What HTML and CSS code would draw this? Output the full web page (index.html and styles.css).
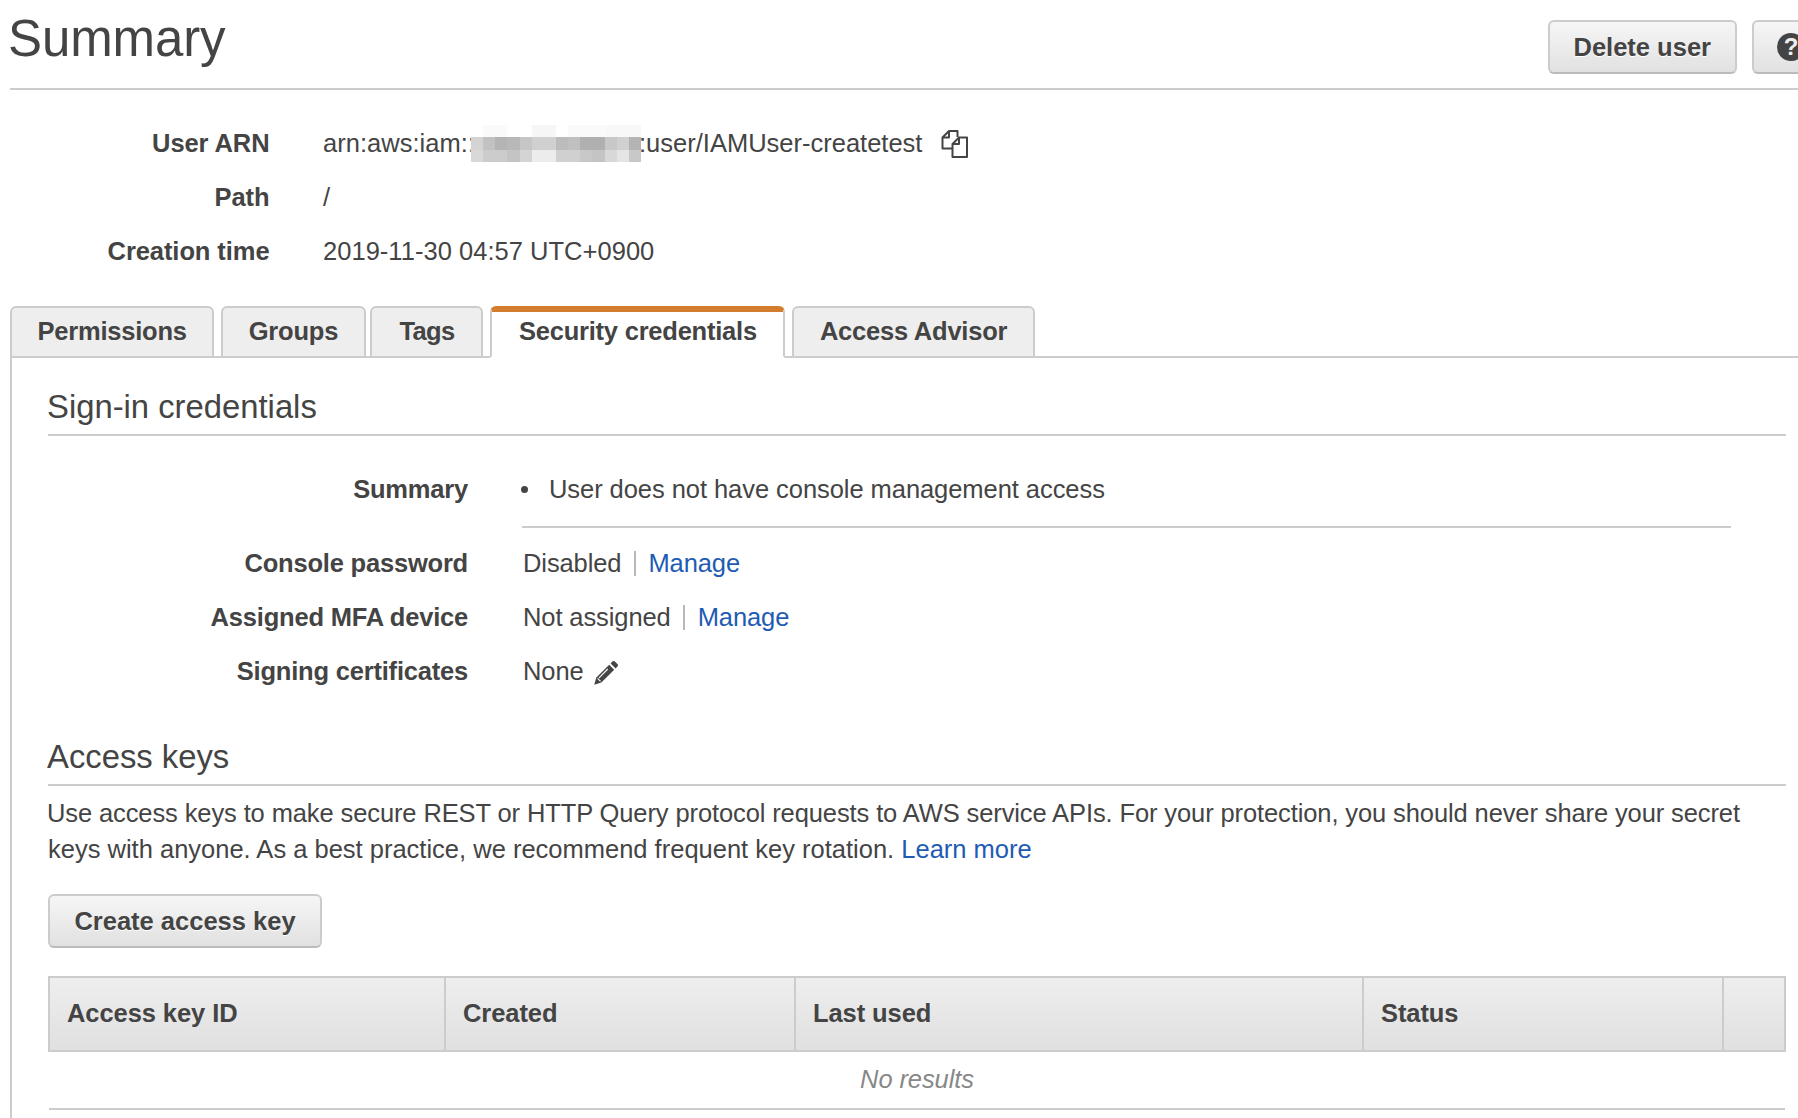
FILE: index.html
```html
<!DOCTYPE html>
<html lang="en">
<head>
<meta charset="utf-8">
<title>Summary</title>
<link rel="stylesheet" href="styles.css">
</head>
<body>
<header class="page-head">
  <h1 class="page-title">Summary</h1>
  <div class="head-actions">
    <button class="btn btn-delete">Delete user</button>
    <button class="btn btn-help"><span class="help-dot">?</span></button>
  </div>
</header>

<dl class="meta">
  <dt>User ARN</dt>
  <dd><span>arn:aws:iam::</span><svg class="blur" viewBox="0 0 14 3" width="170" height="37" preserveAspectRatio="none" aria-hidden="true" shape-rendering="crispEdges">
    <rect x="1" y="0" width="2" height="1" fill="#fafafa"/><rect x="5" y="0" width="2" height="1" fill="#f6f6f6"/><rect x="8" y="0" width="3" height="1" fill="#fafafa"/><rect x="11" y="0" width="3" height="1" fill="#f8f8f8"/>
    <rect x="0" y="1" width="1" height="1" fill="#d4d4d4"/><rect x="1" y="1" width="1" height="1" fill="#c2c2c2"/><rect x="2" y="1" width="1" height="1" fill="#b4b4b4"/><rect x="3" y="1" width="1" height="1" fill="#b8b8b8"/><rect x="4" y="1" width="1" height="1" fill="#c6c6c6"/><rect x="5" y="1" width="2" height="1" fill="#d0d0d0"/><rect x="7" y="1" width="1" height="1" fill="#bcbcbc"/><rect x="8" y="1" width="1" height="1" fill="#c0c0c0"/><rect x="9" y="1" width="2" height="1" fill="#b0b0b0"/><rect x="11" y="1" width="1" height="1" fill="#c8c8c8"/><rect x="12" y="1" width="1" height="1" fill="#d0d0d0"/><rect x="13" y="1" width="1" height="1" fill="#b4b4b4"/>
    <rect x="0" y="2" width="1" height="1" fill="#d8d8d8"/><rect x="1" y="2" width="2" height="1" fill="#cccccc"/><rect x="3" y="2" width="1" height="1" fill="#c4c4c4"/><rect x="4" y="2" width="1" height="1" fill="#d4d4d4"/><rect x="5" y="2" width="2" height="1" fill="#ececec"/><rect x="7" y="2" width="2" height="1" fill="#d0d0d0"/><rect x="9" y="2" width="1" height="1" fill="#c8c8c8"/><rect x="10" y="2" width="1" height="1" fill="#c4c4c4"/><rect x="11" y="2" width="1" height="1" fill="#d8d8d8"/><rect x="12" y="2" width="1" height="1" fill="#e4e4e4"/><rect x="13" y="2" width="1" height="1" fill="#c8c8c8"/>
  </svg><span class="arn-tail">:user/IAMUser-createtest</span><svg class="copy-icon" viewBox="0 0 27 28" width="27" height="28" aria-hidden="true" fill="none" stroke="#444" stroke-width="2" stroke-linejoin="round">
    <path d="M11 18.5H1.5V7.5L8 1H16.5V7"/><path d="M8 1V7.5H1.5"/><path d="M18 7.5H26V27H11.5V14Z"/><path d="M18 7.5V14H11.5"/>
  </svg></dd>
  <dt>Path</dt>
  <dd>/</dd>
  <dt>Creation time</dt>
  <dd>2019-11-30 04:57 UTC+0900</dd>
</dl>

<nav class="tabs">
  <a class="tab">Permissions</a>
  <a class="tab">Groups</a>
  <a class="tab tab-tags">Tags</a>
  <a class="tab tab-active">Security credentials</a>
  <a class="tab">Access Advisor</a>
</nav>

<main class="panel">
  <h2 class="section-title">Sign-in credentials</h2>
  <dl class="creds">
    <dt class="creds-summary-label">Summary</dt>
    <dd class="creds-summary"><ul class="bullets"><li>User does not have console management access</li></ul></dd>
    <dt>Console password</dt>
    <dd class="creds-value"><span>Disabled</span><span class="sep"></span><a class="link">Manage</a></dd>
    <dt>Assigned MFA device</dt>
    <dd class="creds-value"><span>Not assigned</span><span class="sep"></span><a class="link">Manage</a></dd>
    <dt>Signing certificates</dt>
    <dd class="creds-value"><span>None</span><svg class="pencil" viewBox="0 0 24 24" width="24" height="24" aria-hidden="true">
      <path fill="#444" d="M16.6 2.4 18.4.6a1.8 1.8 0 0 1 2.5 0l2.5 2.5a1.8 1.8 0 0 1 0 2.5l-1.8 1.8Z"/>
      <path fill="#444" d="M15.2 3.8 20.2 8.8 7.4 21.6.2 23.8 2.4 16.6Z"/>
      <path fill="none" stroke="#fff" stroke-width="1.1" d="M5 16.8 13.8 8M3.6 17.4 6.6 20.4"/>
    </svg></dd>
  </dl>

  <h2 class="section-title section-keys">Access keys</h2>
  <p class="intro"><span class="intro-first">Use access keys to make secure REST or HTTP Query protocol requests to AWS service APIs. For your protection, you should never share your secret</span> <span>keys with anyone. As a best practice, we recommend frequent key rotation.</span> <a class="link">Learn more</a></p>
  <button class="btn btn-create">Create access key</button>

  <table class="keys">
    <colgroup>
      <col class="col-id"><col class="col-created"><col class="col-used"><col class="col-status"><col>
    </colgroup>
    <thead>
      <tr><th>Access key ID</th><th>Created</th><th>Last used</th><th>Status</th><th></th></tr>
    </thead>
    <tbody>
      <tr><td colspan="5" class="empty">No results</td></tr>
    </tbody>
  </table>
</main>
</body>
</html>
```
FILE: styles.css
```css
html, body {
  margin: 0;
  padding: 0;
  height: 1118px;
  overflow: hidden;
  background: #fff;
}
body {
  width: 1798px;
  font-family: "Liberation Sans", Arial, sans-serif;
  font-size: 25.5px;
  color: #444;
}
h1, h2, p, dl, dd, dt, ul { margin: 0; padding: 0; }

.page-head {
  display: flex;
  justify-content: space-between;
  margin-left: 10px;
  width: 1802px;
  height: 88px;
  border-bottom: 2px solid #ccc;
}
.page-title {
  font-size: 51px;
  font-weight: 400;
  line-height: 78px;
  text-indent: -2px;
  letter-spacing: -0.1px;
}
.head-actions {
  display: flex;
  gap: 15px;
  padding-top: 20px;
  align-items: flex-start;
}

.btn {
  font: 700 25.5px "Liberation Sans", Arial, sans-serif;
  color: #444;
  height: 54px;
  padding: 0 24px;
  background: linear-gradient(#f6f6f6, #e1e1e1);
  border: 2px solid #ccc;
  border-bottom-color: #bbb;
  border-radius: 6px;
  text-shadow: 0 1px 0 #fff;
  box-sizing: border-box;
}
.btn-help {
  width: 60px;
  padding: 0 0 0 23px;
  display: flex;
  align-items: center;
}
.help-dot {
  display: block;
  flex: none;
  width: 28px;
  height: 28px;
  border-radius: 50%;
  background: #444;
  color: #eee;
  font-size: 24px;
  line-height: 28px;
  text-align: center;
  text-shadow: none;
}

.meta {
  display: grid;
  grid-template-columns: 269.5px 1fr;
  column-gap: 53.5px;
  grid-auto-rows: 54px;
  align-items: center;
  margin-top: 26.5px;
}
.meta dt {
  font-weight: 700;
  text-align: right;
  letter-spacing: -0.08px;
}
.meta dd { display: flex; align-items: center; white-space: pre; letter-spacing: 0.03px; }
.blur { margin-left: -4.5px; margin-right: -1.5px; flex: none; }
.arn-tail { letter-spacing: 0; }
.copy-icon { margin-left: 19px; flex: none; }

.tabs {
  display: flex;
  gap: 7px;
  margin: 27.5px 0 -2px 10px;
  position: relative;
  height: 52px;
}
.tab {
  box-sizing: border-box;
  padding: 0 25.5px;
  border: 2px solid #ccc;
  border-radius: 6px 6px 0 0;
  background: #eee;
  font-weight: 700;
  line-height: 46px;
  letter-spacing: -0.22px;
}
.tab-tags {
  margin-left: -3px;
  padding: 0 27px 0 28px;
  letter-spacing: -0.7px;
}
.tab-active {
  padding: 0 26.5px;
  background: #fff;
  border-top: 6px solid #d47d2e;
  border-bottom-color: #fff;
  line-height: 38px;
}

.panel {
  margin-left: 10px;
  width: 1738px;
  padding: 0 12px 40px 36px;
  border-left: 2px solid #ccc;
  border-top: 2px solid #ccc;
}

.section-title {
  font-size: 32.8px;
  font-weight: 400;
  line-height: 50px;
  margin-top: 24px;
  padding-bottom: 2px;
  border-bottom: 2px solid #ccc;
  text-indent: -1px;
}
.section-keys { margin-top: 34px; }

.creds {
  display: grid;
  grid-template-columns: 420px 1209px;
  grid-template-rows: 73px 54px 54px 54px;
  column-gap: 54px;
  width: 1683px;
  margin-top: 27px;
  align-items: center;
}
.creds dt {
  font-weight: 700;
  text-align: right;
  letter-spacing: -0.2px;
}
.creds-value {
  display: flex;
  align-items: center;
  padding-left: 1px;
  letter-spacing: -0.1px;
}
.creds-summary-label {
  align-self: start;
  line-height: 52px;
}
.creds-summary {
  align-self: start;
  height: 63px;
  border-bottom: 2px solid #ccc;
}
.bullets {
  list-style: none;
  position: relative;
  line-height: 52px;
  padding-left: 27px;
  letter-spacing: -0.06px;
}
.bullets li::before {
  content: "";
  position: absolute;
  left: -1px;
  top: 23px;
  width: 7px;
  height: 7px;
  border-radius: 50%;
  background: #444;
}
.sep {
  display: inline-block;
  width: 2px;
  height: 25px;
  background: #b8b8b8;
  margin: 0 12.5px;
}
.link { color: #1e5cb3; }
.pencil {
  margin: 4px 0 0 10px;
  flex: none;
}

.intro {
  margin-top: 9px;
  line-height: 36px;
  text-indent: -1px;
}
.intro-first { letter-spacing: -0.11px; }
.btn-create {
  display: block;
  margin: 27px 0 28px;
  width: 274px;
  padding: 0;
}

.keys {
  width: 1738px;
  table-layout: fixed;
  border-collapse: collapse;
}
.col-id { width: 396px; }
.col-created { width: 350px; }
.col-used { width: 568px; }
.col-status { width: 360px; }
.keys th {
  height: 70px;
  padding: 0 0 2px 17px;
  text-align: left;
  font-weight: 700;
  letter-spacing: -0.08px;
  border: 2px solid #ccc;
  background: linear-gradient(#eee, #e0e0e0);
}
.keys td.empty {
  height: 54px;
  padding: 0 0 2px;
  text-align: center;
  font-style: italic;
  letter-spacing: -0.1px;
  color: #888;
  border-bottom: 2px solid #ccc;
}
```
